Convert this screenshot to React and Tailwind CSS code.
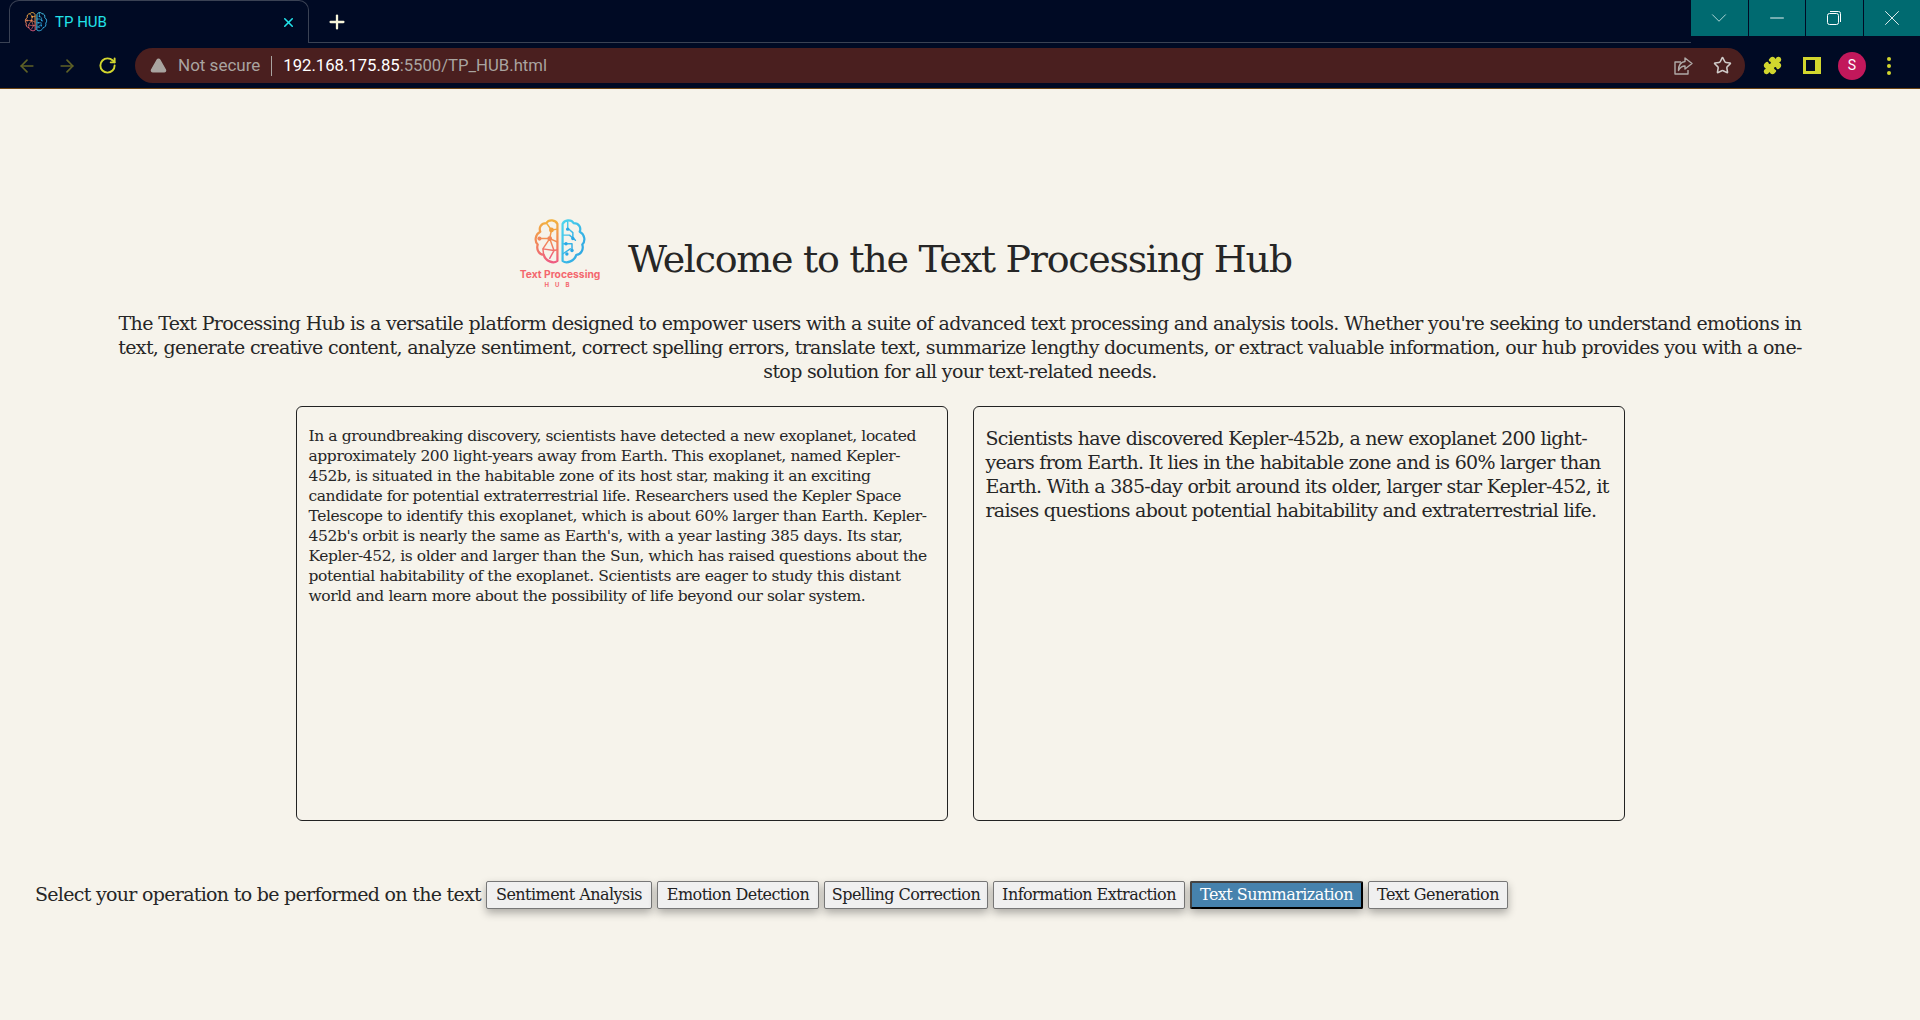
import { ArrowLeft, ArrowRight, RotateCw, Plus, X, Minus, ChevronDown, Star, Puzzle, TriangleAlert } from "lucide-react";

const slab = "font-['DejaVu_Serif',serif]";

const operations = [
  { label: "Sentiment Analysis", width: "w-[166px]" },
  { label: "Emotion Detection", width: "w-[162px]" },
  { label: "Spelling Correction", width: "w-[164px]" },
  { label: "Information Extraction", width: "w-[192px]" },
  { label: "Text Summarization", width: "w-[173px]", active: true },
  { label: "Text Generation", width: "w-[140px]" },
];

const BrainIcon = ({ className }) => (
  <svg viewBox="0 0 64 56" className={className} fill="none" strokeLinecap="round" strokeLinejoin="round">
    <defs>
      <linearGradient id="brainLeft" x1="0" y1="0" x2="0" y2="1">
        <stop offset="0" stopColor="#f2b13f" />
        <stop offset="0.55" stopColor="#f2865a" />
        <stop offset="1" stopColor="#ee5c82" />
      </linearGradient>
      <linearGradient id="brainRight" x1="0" y1="0" x2="1" y2="1">
        <stop offset="0" stopColor="#4fd6ee" />
        <stop offset="1" stopColor="#2a9fe0" />
      </linearGradient>
    </defs>
    <g stroke="url(#brainLeft)" strokeWidth="2.6">
      <path d="M29 7C27 2 19 1 16 6C10 6 7 11 9 16C3 19 2 27 6 31C4 37 8 43 13 43C15 50 24 54 29 50Z" />
      <path d="M17 7L22 14L29 13M22 14L20 24L29 28M20 24L8 24M20 24L12 36L13 43M20 24L25 38L29 37M25 38L20 47M12 36L25 38" strokeWidth="1.7" />
      <circle cx="22" cy="14" r="2.8" fill="#f2a23f" stroke="none" />
      <circle cx="20" cy="24" r="2.8" fill="#f2865a" stroke="none" />
      <circle cx="8" cy="24" r="2.4" fill="#f2865a" stroke="none" />
    </g>
    <g stroke="url(#brainRight)" strokeWidth="2.6">
      <path d="M35 7C37 2 45 1 48 6C54 6 57 11 55 16C61 19 62 27 58 31C60 37 56 43 51 43C49 50 40 54 35 50Z" />
      <path d="M41 4V12L47 17V24M35 20H43L50 26M35 30H46V38M35 42L44 36" strokeWidth="1.7" />
      <circle cx="47" cy="24" r="2" fill="#2aa8e6" stroke="none" />
      <circle cx="41" cy="13" r="2" fill="#2aa8e6" stroke="none" />
      <circle cx="46" cy="38" r="2" fill="#2aa8e6" stroke="none" />
      <circle cx="39" cy="30" r="2" fill="#2aa8e6" stroke="none" />
      <circle cx="40" cy="42" r="2" fill="#2aa8e6" stroke="none" />
    </g>
  </svg>
);

const TitleBar = () => (
  <div className="flex h-[43px] items-start bg-[#000a24] font-['Roboto',sans-serif]">
    <div className="flex h-[43px] flex-1 items-end border-b border-[#3a4254] pl-[9px]">
      <div className="relative top-px flex h-[43px] w-[300px] items-center rounded-t-[10px] border border-b-0 border-[#3a4254] bg-[#000a24] pl-[14px] pr-[12px]">
        <BrainIcon className="h-[24px] w-[24px]" />
        <span className="ml-[7px] flex-1 text-[15px] text-[#22e3ea]">TP HUB</span>
        <X className="h-[15px] w-[15px] text-[#22e3ea]" strokeWidth={2.5} />
      </div>
      <Plus className="mb-[9px] ml-[17px] h-[22px] w-[22px] text-[#f7f5da]" strokeWidth={2.5} />
    </div>
    <div className="flex h-[36px] w-[229px] gap-px bg-[#000a24]">
      <div className="flex flex-1 items-center justify-center bg-[#006a70]">
        <ChevronDown className="h-[26px] w-[26px] text-[#c9e4e4]" strokeWidth={0.8} />
      </div>
      <div className="flex flex-1 items-center justify-center bg-[#006a70]">
        <Minus className="h-[22px] w-[22px] text-white" strokeWidth={1} />
      </div>
      <div className="flex flex-1 items-center justify-center bg-[#006a70]">
        <svg viewBox="0 0 14 14" className="h-[14px] w-[14px]" fill="none" stroke="white" strokeWidth="1">
          <rect x="0.5" y="2.5" width="11" height="11" rx="2" />
          <path d="M3 0.5H11.5A2 2 0 0 1 13.5 2.5V11" />
        </svg>
      </div>
      <div className="flex flex-1 items-center justify-center bg-[#006a70]">
        <X className="h-[26px] w-[26px] text-white" strokeWidth={0.8} />
      </div>
    </div>
  </div>
);

const Toolbar = () => (
  <div className="flex h-[46px] items-center border-b border-[#6b4413] bg-[#000a24] font-['Roboto',sans-serif]">
    <ArrowLeft className="ml-[17px] h-[20px] w-[20px] text-[#5f6226]" strokeWidth={2} />
    <ArrowRight className="ml-[20px] h-[20px] w-[20px] text-[#5f6226]" strokeWidth={2} />
    <RotateCw className="ml-[21px] h-[19px] w-[19px] text-[#d2d62e]" strokeWidth={2.4} />
    <div className="ml-[18px] flex h-[35px] w-[1610px] items-center rounded-full bg-[#4a1f1f] pl-[15px] pr-[13px] text-[17px]">
      <TriangleAlert className="h-[17px] w-[17px] fill-[#a9a4a0] text-[#a9a4a0]" />
      <span className="ml-[11px] text-[#a9a4a0]">Not secure</span>
      <span className="mx-[11px] h-[20px] w-px bg-[#a9a4a0]" />
      <span className="text-[16.7px] text-white">192.168.175.85</span>
      <span className="text-[16.7px] text-[#a9a4a0]">:5500/TP_HUB.html</span>
      <svg viewBox="0 0 20 20" className="ml-auto h-[20px] w-[20px]" fill="none" stroke="#b0aaa8" strokeWidth="1.4" strokeLinejoin="round">
        <path d="M8 6H2V18H15V14" />
        <path d="M12 2L19 7.5L12 13V10C9 10 7 11.5 5.5 14.5C5.5 9.5 8 6 12 5.5Z" />
      </svg>
      <Star className="ml-[20px] h-[19px] w-[19px] text-[#cfcac8]" strokeWidth={2} />
    </div>
    <Puzzle className="ml-[18px] h-[19px] w-[19px] fill-[#d2d62e] text-[#d2d62e]" />
    <div className="ml-[21px] flex h-[17px] w-[18px] justify-end bg-[#d2d62e]">
      <div className="m-[3px] mr-[6px] h-[11px] w-[9px] bg-[#000a24]" />
    </div>
    <div className="ml-[17px] flex h-[28px] w-[28px] items-center justify-center rounded-full bg-[#c2185b] text-[14px] text-white">S</div>
    <div className="ml-[21px] flex flex-col gap-[3px]">
      <span className="h-1 w-1 rounded-full bg-[#d2d62e]" />
      <span className="h-1 w-1 rounded-full bg-[#d2d62e]" />
      <span className="h-1 w-1 rounded-full bg-[#d2d62e]" />
    </div>
  </div>
);

export default function App() {
  return (
    <div className={`flex h-screen flex-col overflow-hidden bg-[#f6f3eb] text-[#262626] ${slab}`}>
      <TitleBar />
      <Toolbar />

      <main className="flex flex-1 flex-col">
        <div className="mt-[129px] flex items-center pl-[518px]">
          <div className="flex w-[84px] flex-col items-center">
            <BrainIcon className="h-[48px] w-[56px]" />
            <span className="mt-[2px] font-['Inter',sans-serif] text-[10.3px] font-bold leading-[12px] text-[#f4676e]">Text Processing</span>
            <span className="font-['Inter',sans-serif] text-[6px] font-bold leading-[10px] tracking-[6px] text-[#f4676e]">HUB</span>
          </div>
          <h1 className="ml-[26px] pt-[10px] text-[38px] font-extralight leading-[48px] tracking-[-1.3px]">Welcome to the Text Processing Hub</h1>
        </div>

        <p className="mt-[21px] text-center text-[19px] leading-[24px] tracking-[-0.66px]">
          The Text Processing Hub is a versatile platform designed to empower users with a suite of advanced text processing and analysis tools. Whether you're seeking to understand emotions in<br />
          text, generate creative content, analyze sentiment, correct spelling errors, translate text, summarize lengthy documents, or extract valuable information, our hub provides you with a one-<br />
          stop solution for all your text-related needs.
        </p>

        <div className="mt-[23px] flex justify-center gap-[25px]">
          <div className="h-[415px] w-[652px] rounded-[6px] border border-[#222] px-3 py-[19px] text-[15.5px] leading-[20px] tracking-[-0.4px]">
            In a groundbreaking discovery, scientists have detected a new exoplanet, located<br />
            approximately 200 light-years away from Earth. This exoplanet, named Kepler-<br />
            452b, is situated in the habitable zone of its host star, making it an exciting<br />
            candidate for potential extraterrestrial life. Researchers used the Kepler Space<br />
            Telescope to identify this exoplanet, which is about 60% larger than Earth. Kepler-<br />
            452b's orbit is nearly the same as Earth's, with a year lasting 385 days. Its star,<br />
            Kepler-452, is older and larger than the Sun, which has raised questions about the<br />
            potential habitability of the exoplanet. Scientists are eager to study this distant<br />
            world and learn more about the possibility of life beyond our solar system.
          </div>
          <div className="h-[415px] w-[652px] whitespace-nowrap rounded-[6px] border border-[#222] px-3 py-[19px] text-[19px] leading-[24px] tracking-[-0.72px]">
            Scientists have discovered Kepler-452b, a new exoplanet 200 light-<br />
            years from Earth. It lies in the habitable zone and is 60% larger than<br />
            Earth. With a 385-day orbit around its older, larger star Kepler-452, it<br />
            raises questions about potential habitability and extraterrestrial life.
          </div>
        </div>

        <div className="mt-[60px] flex items-center pl-[35px]">
          <span className="mr-[5px] -mt-[2px] w-[446px] whitespace-nowrap text-[19px] tracking-[-0.7px]">Select your operation to be performed on the text</span>
          <div className="flex gap-[5px]">
            {operations.map((op) => (
              <button
                key={op.label}
                className={`h-[28px] whitespace-nowrap rounded-[2px] text-center text-[16px] tracking-[-0.55px] shadow-[0_4px_8px_rgba(0,0,0,0.3)] ${op.width} ${
                  op.active
                    ? "border-2 border-[#444] border-r-black border-b-black bg-[#4682ad] text-white"
                    : "border border-[#777] bg-[#f0f0f0] text-[#222]"
                }`}
              >
                {op.label}
              </button>
            ))}
          </div>
        </div>
      </main>
    </div>
  );
}
